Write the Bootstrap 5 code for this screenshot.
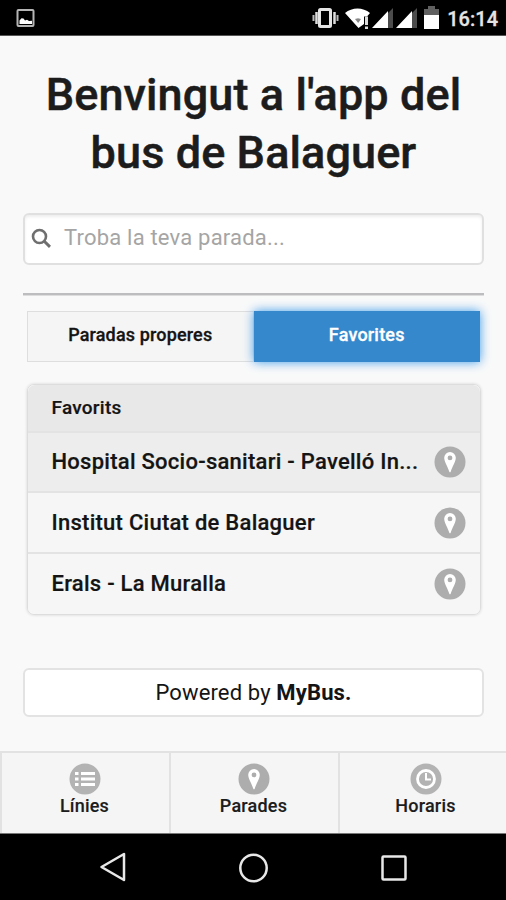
<!DOCTYPE html>
<html lang="ca">
<head>
<meta charset="utf-8">
<meta name="viewport" content="width=device-width, initial-scale=1">
<title>Bus de Balaguer</title>
<link href="https://cdn.jsdelivr.net/npm/bootstrap@5.3.0/dist/css/bootstrap.min.css" rel="stylesheet">
<style>
body{font-family:Roboto,"Liberation Sans",sans-serif;background:#f9f9f9;color:#1c1c1c;height:900px;overflow:hidden}
svg{display:block;flex:none}
.status{height:36px;background:#000;border-bottom:1px solid #555}
.clock{font-size:20px;line-height:24px;font-weight:500;color:#e4e4e4;letter-spacing:0;margin-top:7px;-webkit-text-stroke:.3px}
main{padding:0 22px 0 23px}
.welcome{font-size:45px;line-height:58px;font-weight:500;color:#1c1c1c;margin:30px 0 0;height:116px;letter-spacing:.1px;-webkit-text-stroke:.5px #1c1c1c}
.search{height:52px;margin-top:31px;border:2px solid #e0e0e0;border-radius:6px;background:#fff;box-shadow:inset 0 2px 3px #eee;padding:0 6px}
.search input{font-size:22px;line-height:28px;color:#a5a5a5;letter-spacing:.2px;padding:0 0 2px;margin-left:13px}
.search input::placeholder{color:#a5a5a5;opacity:1}
.rule{height:3px;background:#bdbdbf;margin-top:28px;border-bottom:1px solid #ddd}
.switch{height:51px;margin:15px 4px 0 4px}
.switch .btn{border-radius:0;font-size:18px;font-weight:500;line-height:22px;padding:0 0 3px;border:1px solid #dedede;background:#f5f5f5;color:#141414;letter-spacing:.15px;-webkit-text-stroke:.3px}
.switch .btn.active{background:#3588cc;border-color:#3588cc;color:#fff;box-shadow:0 0 10px #3d9bea;letter-spacing:.2px}
.stops{margin:22px 3px 0 4px;border-radius:7px;border:1px solid #ddd;box-shadow:0 0 3px #d2d2d2;overflow:hidden}
.stops .list-group-item{height:61px;padding:0 14px 0 23.500px;background:#f6f6f6;border:0;border-top:2px solid #e3e3e3;font-size:22px;font-weight:500;color:#141414;letter-spacing:.26px;-webkit-text-stroke:.2px}
.stops .stopname{padding-bottom:1px}
.stops .list-group-item.head{height:46px;background:#e8e8e8;font-size:19px;border-top:0;letter-spacing:.25px}
.stops .list-group-item.pressed{background:#ededed;height:60px}
.stops .list-group-item:last-child{height:62px}
.powered{height:49px;margin-top:53px;border:2px solid #e3e3e3;border-radius:6px;background:#fff;font-size:22px;color:#141414;letter-spacing:.14px;padding-bottom:1px}
.tabs{height:82px;background:#f5f5f5;border-top:2px solid #e2e2e2}
.tabs a{width:169px;color:#1c1c1c;font-size:18px;line-height:22px;font-weight:500;padding:10px 2px 0 0;letter-spacing:.2px;border-left:2px solid #e2e2e2;-webkit-text-stroke:.15px}
.tabs a:last-child{width:168px;padding-left:5px;padding-right:0}
.sysnav{height:67px;background:#000;border-top:1px solid #777}
</style>
<script src="https://cdn.jsdelivr.net/npm/bootstrap@5.3.0/dist/js/bootstrap.bundle.min.js"></script>
</head>
<body class="d-flex flex-column">
<svg width="0" height="0" class="position-absolute" aria-hidden="true">
<symbol id="pin" viewBox="0 0 32 32"><circle cx="16" cy="16" r="15.5" fill="#adadad"/><path fill="#fff" fill-rule="evenodd" d="M16 6a5.800 5.800 0 0 0-5.800 5.800c0 4 3.800 9.500 5.100 13.900q.7 1 1.400 0c1.300-4.400 5.100-9.900 5.100-13.900A5.800 5.800 0 0 0 16 6zm0 3.500a2.400 2.400 0 1 1 0 4.800 2.400 2.400 0 0 1 0-4.800z"/></symbol>
</svg>
<header class="status d-flex align-items-start justify-content-between flex-shrink-0">
<svg width="40" height="35" viewBox="0 0 40 35"><rect x="17.500" y="10" width="16" height="16" rx="1" fill="none" stroke="#b5b5b5" stroke-width="2"/><path fill="#fff" d="M19.500 24v-3.500l2-2.300 2 .3 1.500 2 2-.8 2 1.300 3-.2V24z"/></svg>
<div class="d-flex">
<svg width="144" height="35" viewBox="304 0 144 35">
<rect x="320.500" y="9.500" width="11" height="17" rx="1" fill="none" stroke="#e5e5e5" stroke-width="3"/>
<path d="M317.500 12v12M335.500 12v12" stroke="#ddd" stroke-width="2.500"/><path d="M314.500 15v6M338.500 15v6" stroke="#bbb" stroke-width="2"/>
<path fill="#fff" d="M346 13c7-6 18-6 25 0l-3 3.500h-3V24l-5.500 4z"/><path fill="#888" d="M356 19l3-.8 3 .8-2.800 4z"/><path fill="#ddd" d="M366 16.500h3V25h-3zM366 26.500h3v2.500h-3z"/>
<path fill="#4c4c4c" d="M389 13l5-5v20h-5zM413 13l5-5v20h-5z"/><path fill="#fff" d="M373 28l16-17v17zM397 28l16-17v17z"/>
<path fill="#606060" d="M425 9h4V6h7v3h4v7h-15z"/><path fill="#fff" d="M425 15h15v14h-15z"/>
</svg>
<span class="clock me-2">16:14</span>
</div>
</header>
<main class="flex-grow-1">
<h1 class="welcome text-center text-nowrap">Benvingut a l'app del<br>bus de Balaguer</h1>
<div class="search d-flex align-items-center">
<svg width="20" height="22" viewBox="0 0 20 22"><circle cx="8.500" cy="8.500" r="6.500" fill="none" stroke="#6f6f6f" stroke-width="2.600"/><path d="M13 13l6 5.800" stroke="#6f6f6f" stroke-width="3"/></svg>
<input class="border-0 bg-transparent flex-grow-1" type="text" placeholder="Troba la teva parada..." aria-label="Troba la teva parada">
</div>
<div class="rule"></div>
<div class="switch d-flex">
<button class="btn w-50">Paradas properes</button>
<button class="btn active w-50">Favorites</button>
</div>
<div class="stops list-group list-group-flush">
<div class="list-group-item head d-flex align-items-center">Favorits</div>
<div class="list-group-item pressed d-flex align-items-center justify-content-between"><span class="stopname">Hospital Socio-sanitari - Pavelló In...</span><svg width="32" height="32"><use href="#pin"/></svg></div>
<div class="list-group-item d-flex align-items-center justify-content-between"><span class="stopname">Institut Ciutat de Balaguer</span><svg width="32" height="32"><use href="#pin"/></svg></div>
<div class="list-group-item d-flex align-items-center justify-content-between"><span class="stopname">Erals - La Muralla</span><svg width="32" height="32"><use href="#pin"/></svg></div>
</div>
<div class="powered d-flex align-items-center justify-content-center"><span>Powered by <strong>MyBus.</strong></span></div>
</main>
<nav class="tabs d-flex flex-shrink-0">
<a class="d-flex flex-column align-items-center text-decoration-none" href="#"><svg width="32" height="32" viewBox="0 0 32 32"><circle cx="16" cy="16" r="15.500" fill="#b3b3b3"/><path d="M6 10.500h3.500M6 16h3.500M6 21.500h3.500M12 10.500h14M12 16h14M12 21.500h14" stroke="#fff" stroke-width="3"/></svg><span>Línies</span></a>
<a class="d-flex flex-column align-items-center text-decoration-none" href="#"><svg width="32" height="32"><use href="#pin"/></svg><span>Parades</span></a>
<a class="d-flex flex-column align-items-center text-decoration-none" href="#"><svg width="32" height="32" viewBox="0 0 32 32"><circle cx="16" cy="16" r="15.500" fill="#b3b3b3"/><circle cx="16" cy="16" r="8.500" fill="none" stroke="#fff" stroke-width="2.800"/><path d="M16 10v6.500h5" fill="none" stroke="#fff" stroke-width="2"/></svg><span>Horaris</span></a>
</nav>
<footer class="sysnav flex-shrink-0">
<svg width="506" height="66" viewBox="0 834 506 66" fill="none" stroke="#e8e8e8" stroke-width="2.500"><path d="M101.500 867L124 854v26z" stroke-linejoin="round"/><circle cx="253.500" cy="868" r="13.200"/><rect x="382.500" y="856.500" width="23" height="23" rx="1"/></svg>
</footer>
</body>
</html>
